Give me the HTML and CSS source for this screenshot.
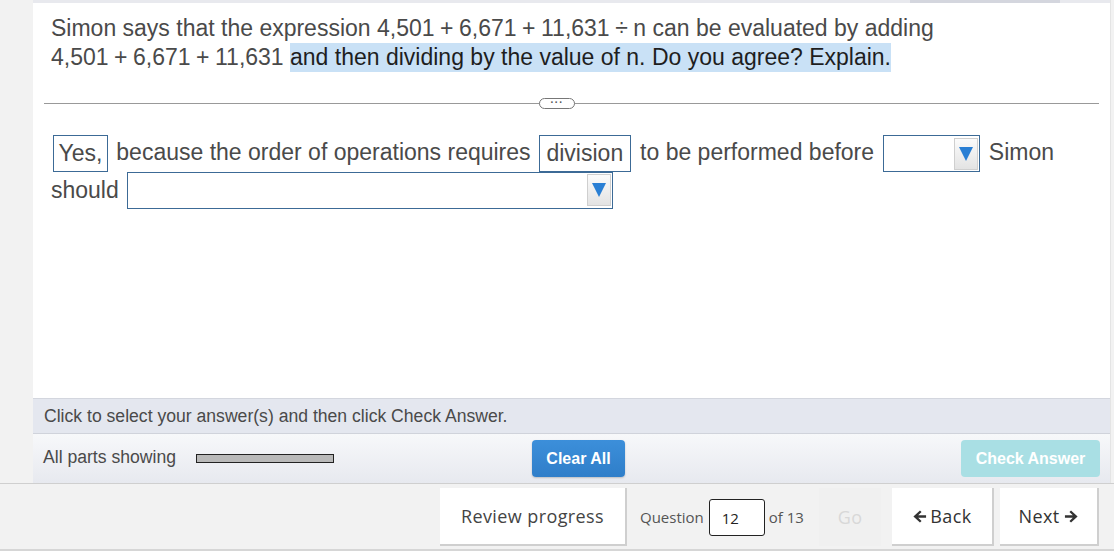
FILE: index.html
```html
<!DOCTYPE html>
<html>
<head>
<meta charset="utf-8">
<link rel="stylesheet" href="styles.css">
</head>
<body>
<div class="page">
  <div class="main">
    <div class="topstrip"><div class="topseg"></div></div>
    <div class="question">
      Simon says that the expression 4,501<span class="op">+</span>6,671<span class="op">+</span>11,631<span class="op">÷</span>n can be evaluated by adding<br>
      4,501<span class="op">+</span>6,671<span class="op">+</span>11,631 <span class="hl">and then dividing by the value of n. Do you agree? Explain.</span>
    </div>
    <div class="divider">
      <div class="pill">···</div>
    </div>
    <div class="answer">
      <span class="box yes">Yes,</span> because the order of operations requires <span class="box div">division</span> to be performed before <span class="select sel-short"><span class="arrow"><svg width="16" height="16" viewBox="0 0 16 16"><path d="M1 1 L15 1 L8 15 Z" fill="#2a7fd4"/></svg></span></span> Simon<br>should <span class="select sel-long"><span class="arrow"><svg width="16" height="16" viewBox="0 0 16 16"><path d="M1 1 L15 1 L8 15 Z" fill="#2a7fd4"/></svg></span></span>
    </div>
    <div class="spacer"></div>
    <div class="instructions">Click to select your answer(s) and then click Check Answer.</div>
    <div class="controls">
      <span class="parts">All parts showing</span>
      <span class="progress"></span>
      <button class="btn-clear">Clear All</button>
      <span class="grow"></span>
      <button class="btn-check">Check Answer</button>
    </div>
  </div>
  <div class="footer">
    <button class="fbtn review">Review progress</button>
    <div class="qnav">
      <span>Question</span>
      <span class="qinput">12</span>
      <span>of 13</span>
    </div>
    <button class="fbtn go">Go</button>
    <button class="fbtn back"><svg width="15" height="15" viewBox="0 0 16 16"><path d="M8.5 1.5 L10.2 3.2 L6.6 6.7 L15 6.7 L15 9.3 L6.6 9.3 L10.2 12.8 L8.5 14.5 L1.5 8 Z" fill="#333"/></svg>Back</button>
    <button class="fbtn next">Next<svg width="15" height="15" viewBox="0 0 16 16"><path d="M7.5 1.5 L5.8 3.2 L9.4 6.7 L1 6.7 L1 9.3 L9.4 9.3 L5.8 12.8 L7.5 14.5 L14.5 8 Z" fill="#333"/></svg></button>
  </div>
</div>
</body>
</html>
```

FILE: styles.css
```css
* { box-sizing: border-box; }
html, body { margin: 0; padding: 0; }
body {
  background: #f2f2f2;
  font-family: "Liberation Sans", Arial, sans-serif;
  width: 1114px;
  height: 551px;
  overflow: hidden;
}
.page { display: flex; flex-direction: column; height: 551px; }
.main {
  margin-left: 33px;
  width: 1078px;
  height: 483px;
  background: #fff;
  display: flex;
  flex-direction: column;
  border-right: 1px solid #e4e4e4;
}
.topstrip {
  height: 3px;
  background: #e8e9ee;
  display: flex;
}
.topseg {
  margin-left: 877px;
  width: 150px;
  height: 3px;
  background: #d4d6de;
}
.question {
  padding: 11px 0 0 18px;
  font-size: 23px;
  line-height: 29px;
  color: #4a4a4a;
}
.op { margin: 0 5.5px; }
.hl {
  background: #c9e1f6;
  color: #1e1e1e;
  padding: 1px 0 2px 0;
}
.divider {
  margin: 31px 11px 0 11px;
  height: 1px;
  background: #999;
  display: flex;
  align-items: center;
}
.pill {
  margin-left: 495px;
  width: 36px;
  height: 11px;
  border: 1px solid #777;
  border-radius: 6px;
  background: #fff;
  font-size: 10px;
  font-weight: bold;
  line-height: 7px;
  text-align: center;
  color: #555;
  letter-spacing: 1px;
}
.answer {
  padding: 30px 0 0 18px;
  font-size: 23px;
  line-height: 37px;
  color: #4a4a4a;
}
.box {
  display: inline-block;
  border: 1px solid #3c6a96;
  line-height: 34px;
  height: 37px;
  vertical-align: middle;
}
.yes { padding: 0 4.5px; margin: 0 2px; }
.div { padding: 0 6.5px; margin: 0 3px 0 2px; }
.select {
  display: inline-flex;
  justify-content: flex-end;
  align-items: center;
  border: 1px solid #3c6a96;
  height: 37px;
  vertical-align: middle;
  padding-right: 1px;
}
.sel-short { width: 97px; margin: 0 2px 0 3px; }
.sel-long { width: 486px; margin-left: 2px; position: relative; top: -2px; }
.arrow {
  width: 24px;
  height: 32px;
  background: linear-gradient(#fbfbfb, #e3e3e3);
  border: 1px solid #cfcfcf;
  display: flex;
  align-items: center;
  justify-content: center;
}
.spacer { flex: 1; }
.instructions {
  height: 36px;
  background: #e4e7ef;
  border-top: 1px solid #d3d6de;
  border-bottom: 1px solid #d0d3db;
  padding-left: 11px;
  font-size: 17.6px;
  line-height: 34px;
  color: #4a4a4a;
}
.controls {
  height: 49px;
  background: linear-gradient(#f7f8fa, #e7e9ef);
  display: flex;
  align-items: center;
  padding: 0 10px 0 10px;
}
.parts { font-size: 17.6px; color: #4a4a4a; margin-top: -2px; }
.progress {
  width: 138px;
  height: 9px;
  background: #b9b9b9;
  border: 1px solid #222;
  margin-left: 20px;
}
.btn-clear {
  margin-left: 198px;
  width: 93px;
  height: 37px;
  border: none;
  border-radius: 4px;
  background: linear-gradient(#3c8fda, #2f7ec9);
  color: #fff;
  font-family: "Liberation Sans", Arial, sans-serif;
  font-weight: bold;
  font-size: 16px;
  box-shadow: 0 1px 2px rgba(0,0,0,0.2);
}
.grow { flex: 1; }
.btn-check {
  width: 139px;
  height: 37px;
  border: none;
  border-radius: 4px;
  background: #a9dfe4;
  color: #fff;
  font-family: "Liberation Sans", Arial, sans-serif;
  font-weight: bold;
  font-size: 16px;
}
.footer {
  height: 68px;
  border-top: 1px solid #cfcfcf;
  border-bottom: 2px solid #d6d6d6;
  display: flex;
  align-items: flex-start;
  padding-top: 4px;
  padding-left: 440px;
}
.fbtn {
  height: 58px;
  background: #fff;
  border: none;
  border-right: 2px solid #cfcfcf;
  border-bottom: 2px solid #cfcfcf;
  font-family: "Open Sans", sans-serif;
  font-weight: 500;
  font-size: 18px;
  letter-spacing: 0.4px;
  color: #333;
  display: flex;
  align-items: center;
  justify-content: center;
  padding: 0;
}
.review { width: 187px; color: #444; }
.qnav {
  display: flex;
  align-items: center;
  height: 58px;
  padding-left: 13px;
  font-family: "Open Sans", sans-serif;
  font-size: 15px;
  color: #555;
  width: 192px;
}
.qinput {
  width: 56px;
  height: 37px;
  border: 1px solid #222;
  border-radius: 3px;
  background: #fff;
  margin: 0 4px 0 5px;
  padding-left: 12px;
  line-height: 36px;
  color: #222;
}
.go {
  width: 62px;
  background: #f0f0f0;
  border: none;
  color: #d8d8d8;
  margin-right: 11px;
}
.back { width: 102px; margin-right: 6px; gap: 3px; }
.next { width: 99px; gap: 4px; }
```
